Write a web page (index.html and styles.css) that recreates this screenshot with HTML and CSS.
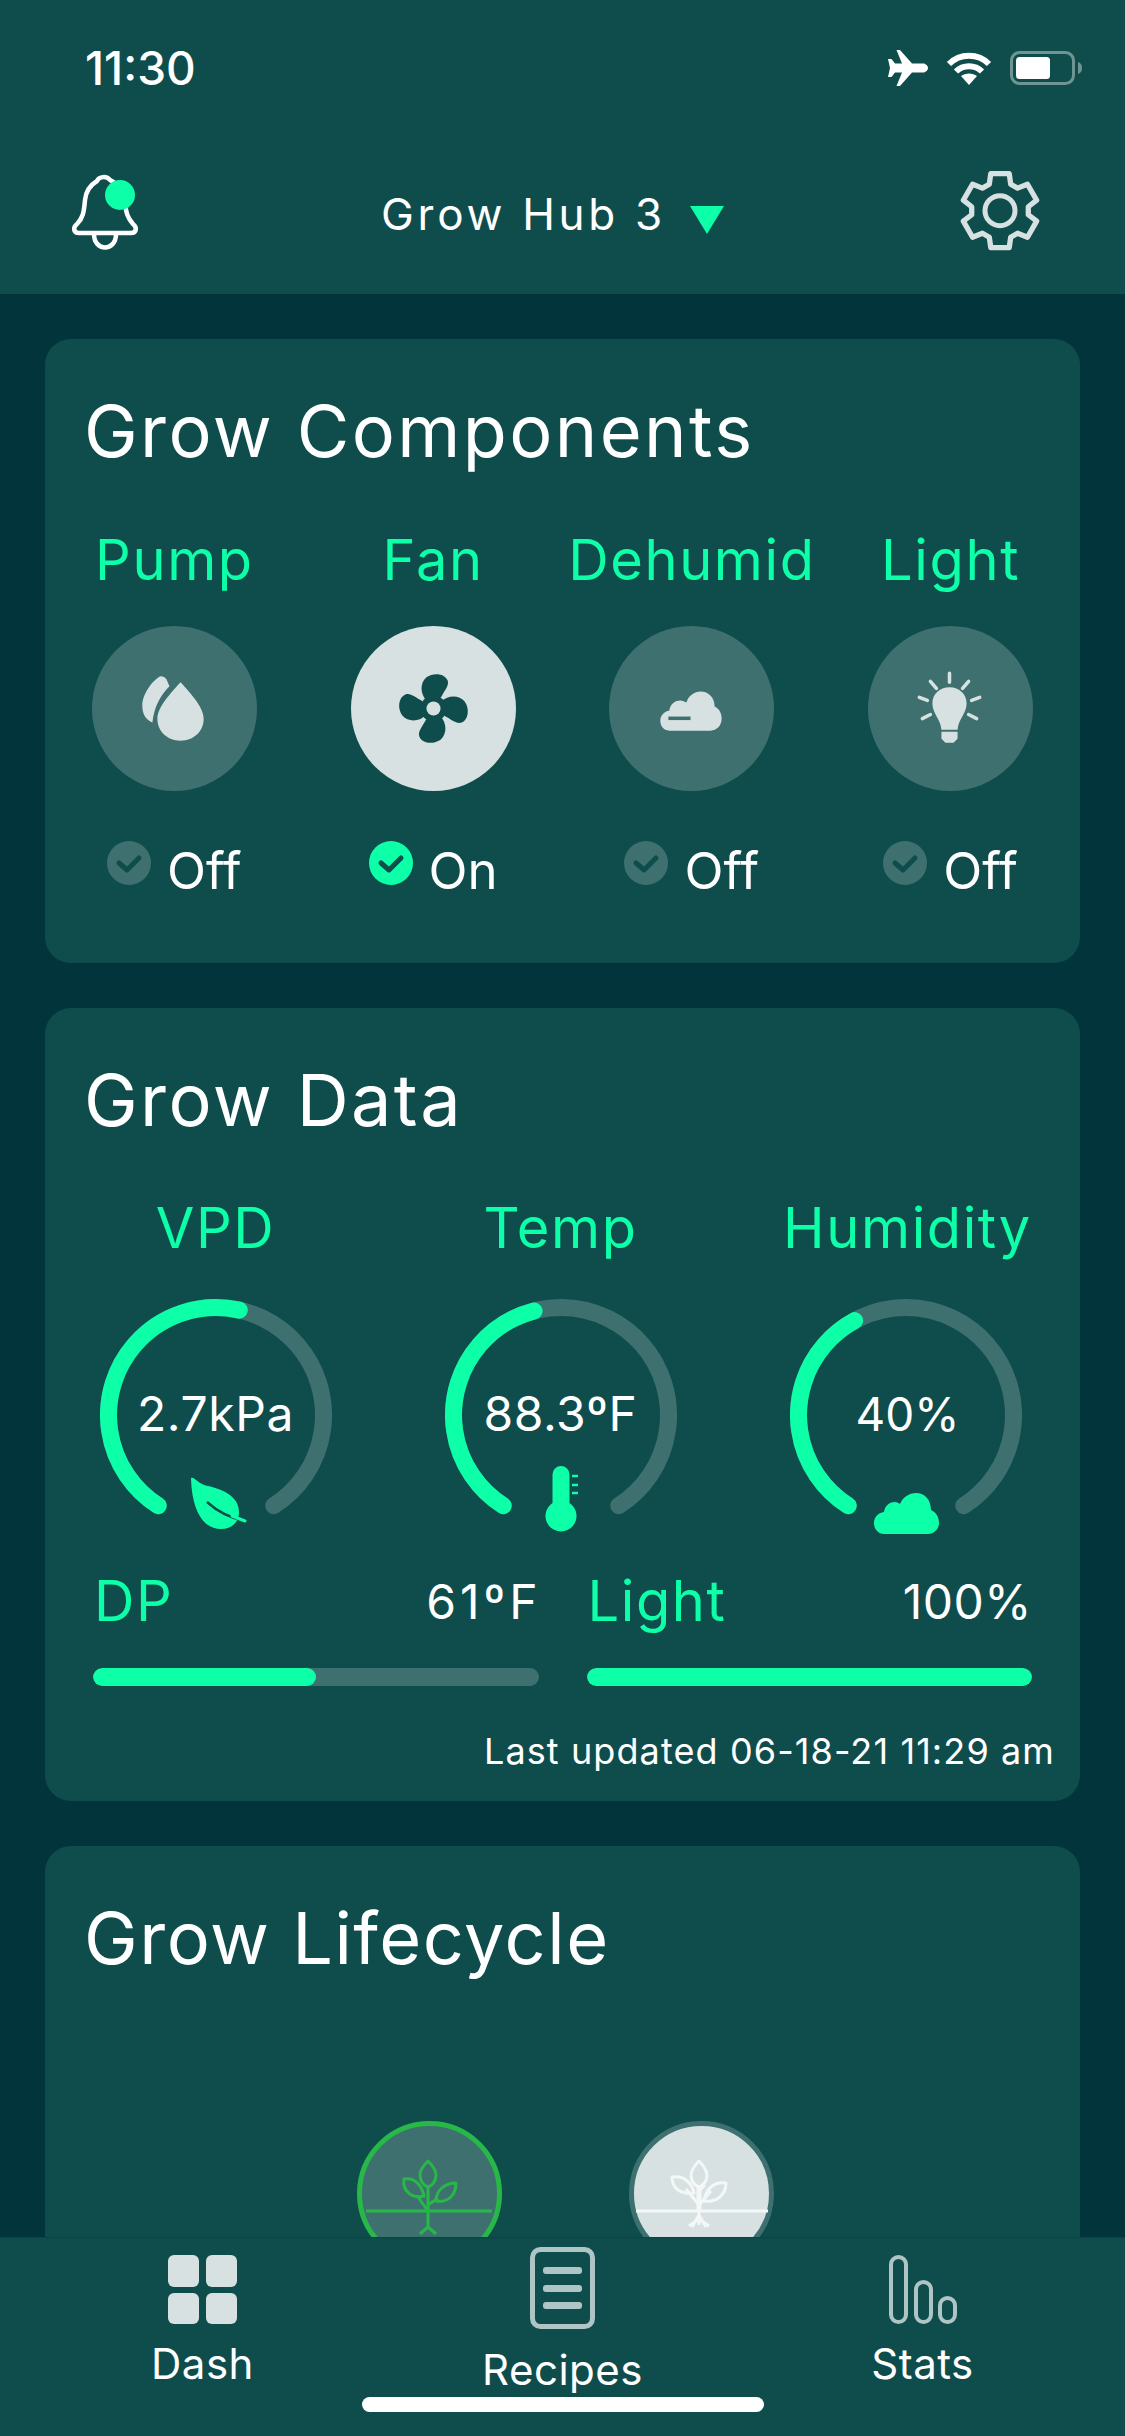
FILE: index.html
```html
<!DOCTYPE html>
<html lang="en">
<head>
<meta charset="utf-8">
<title>Grow Hub</title>
<link rel="stylesheet" href="styles.css">
</head>
<body>
<div class="phone">
  <header class="top">
    <div class="status">
      <span class="time">11:30</span>
      <div class="status-icons">
        <svg class="ic-plane" viewBox="0 0 40 36"><path d="M8.500 0h3.500L24 13.500h11c3 0 5 2.500 5 4.500s-2 4.500-5 4.500H24L12 36H8.500L14 22.500H7L3.500 27H0l2-9-2-9h3.500L7 13.500h7z" fill="#fff"/></svg>
        <svg class="ic-wifi" viewBox="0 0 46 33"><path d="M3 12c11-11 29-11 40 0M10 19.500c7-7 19-7 26 0" fill="none" stroke="#fff" stroke-width="6"/><path d="M23 33l-8-9c4.500-3.500 11.500-3.500 16 0z" fill="#fff"/></svg>
        <svg class="ic-batt" viewBox="0 0 72 34"><rect x="1.500" y="1.500" width="62" height="31" rx="8" fill="none" stroke="#6f9494" stroke-width="3"/><rect x="6" y="6" width="34" height="22" rx="3.500" fill="#fff"/><path d="M68 11c3 1 4 3 4 6s-1 5-4 6z" fill="#6f9494"/></svg>
      </div>
    </div>
    <div class="nav">
      <svg class="ic-bell" viewBox="0 0 70 85"><path d="M9 63C3 63 3 57 7 54 13 48 14 42 15 30 16 20 22 14 27 11 29 6 37 6 40 10 48 14 54 22 55 32 56 44 58 48 63 54 67 57 67 63 61 63Z M24 64C24 82 46 82 46 64" fill="none" stroke="#fff" stroke-width="4.500" stroke-linejoin="round"/><circle cx="50" cy="25" r="15" fill="#0dffa8"/></svg>
      <div class="hub"><span class="hub-name">Grow Hub 3</span><span class="tri"></span></div>
      <svg class="ic-gear" viewBox="0 0 100 100"><g fill="none" stroke="#d7e1e1" stroke-width="5" stroke-linejoin="round"><circle cx="50" cy="50.700" r="15"/><path transform="translate(50 50.700) scale(1.060) translate(-50 -50.700)" d="M41.300 15.800H58.700L60.100 25.700 66.600 29.400 75.900 25.700 84.600 40.800 76.700 47V54.500L84.600 60.600 75.900 75.700 66.600 72 60.100 75.700 58.700 85.600H41.300L39.900 75.700 33.400 72 24.100 75.700 15.400 60.600 23.300 54.500V47L15.400 40.800 24.100 25.700 33.400 29.400 39.900 25.700Z"/></g></svg>
    </div>
  </header>

  <main class="content">
    <section class="card card-components">
      <h2 class="card-title">Grow Components</h2>
      <div class="comp-grid">
        <div class="comp">
          <div class="label">Pump</div>
          <div class="disc">
            <svg viewBox="0 0 164 164"><g fill="#d7e1e1"><path d="M88 56C95 64 111 80 111 92 111 105 101 114 88 114 75 114 65 105 65 92 65 80 81 64 88 56Z"/><path d="M68 50Q72 50 74 53L77 60C68 69 62 80 60 96 53 93 50 87 50 79 50 68 60 54 68 50Z"/></g></svg>
          </div>
          <div class="state"><svg class="check" viewBox="0 0 44 44"><circle cx="22" cy="22" r="22" fill="#3f7070"/><path d="M12 22l8 7 12-12" fill="none" stroke="#0f4d4d" stroke-width="5" stroke-linecap="round" stroke-linejoin="round"/></svg><span>Off</span></div>
        </div>
        <div class="comp">
          <div class="label">Fan</div>
          <div class="disc disc-on">
            <svg viewBox="0 0 164 164"><g fill="#0f4d4d" transform="translate(82 82)"><path id="blade" d="M-7-8C-13-14-14-25-7-31 0-36 11-35 14-28 16-23 11-18 8-12 6-9 2-9-7-8Z"/><use href="#blade" transform="rotate(90)"/><use href="#blade" transform="rotate(180)"/><use href="#blade" transform="rotate(270)"/><circle r="13"/><circle r="7" fill="#d7e1e1"/></g></svg>
          </div>
          <div class="state"><svg class="check" viewBox="0 0 44 44"><circle cx="22" cy="22" r="22" fill="#0dffa8"/><path d="M12 22l8 7 12-12" fill="none" stroke="#0f4d4d" stroke-width="5" stroke-linecap="round" stroke-linejoin="round"/></svg><span>On</span></div>
        </div>
        <div class="comp">
          <div class="label">Dehumid</div>
          <div class="disc">
            <svg viewBox="0 0 164 164"><path d="M60 104C54 104 51 99 51 94 51 89 55 85 60 84 61 77 66 74 71 74 73 74 75 75 77 76 79 69 85 65 91 65 99 65 105 71 105 80 109 82 112 86 112 92 112 99 107 104 101 104Z" fill="#d7e1e1"/><rect x="59" y="90" width="22" height="3.500" fill="#3f7070"/></svg>
          </div>
          <div class="state"><svg class="check" viewBox="0 0 44 44"><circle cx="22" cy="22" r="22" fill="#3f7070"/><path d="M12 22l8 7 12-12" fill="none" stroke="#0f4d4d" stroke-width="5" stroke-linecap="round" stroke-linejoin="round"/></svg><span>Off</span></div>
        </div>
        <div class="comp">
          <div class="label">Light</div>
          <div class="disc">
            <svg viewBox="0 0 164 164"><path d="M81 61C91 61 98 68 98 77 98 87 90 92 89 103H73C72 92 64 87 64 77 64 68 71 61 81 61ZM73 105H89V112L85 116H77L73 112Z" fill="#d7e1e1"/><path d="M81 47V56M62 55L68 62M100 55L94 62M51 71L59 74M111 71L103 74M54 92L62 88M108 92L100 88" stroke="#d7e1e1" stroke-width="3.500" stroke-linecap="round"/></svg>
          </div>
          <div class="state"><svg class="check" viewBox="0 0 44 44"><circle cx="22" cy="22" r="22" fill="#3f7070"/><path d="M12 22l8 7 12-12" fill="none" stroke="#0f4d4d" stroke-width="5" stroke-linecap="round" stroke-linejoin="round"/></svg><span>Off</span></div>
        </div>
      </div>
    </section>

    <section class="card card-data">
      <h2 class="card-title">Grow Data</h2>
      <div class="gauges">
        <div class="gauge">
          <div class="label">VPD</div>
          <div class="dial">
            <svg viewBox="0 0 232 240"><path class="track" d="M58.200 207.700A107.500 107.500 0 1 1 173.800 207.700"/><path class="fill" pathLength="295" stroke-dasharray="160 295" d="M58.200 207.700A107.500 107.500 0 1 1 173.800 207.700"/><path d="M91 180C94 178 98 186 108 188 126 192 139 200 139 214 139 225 131 231 121 231 104 231 92 214 91 180Z" fill="#0dffa8"/><path d="M107 204C118 214 130 220 145 223" fill="none" stroke="#0f4d4d" stroke-width="2.500"/><path d="M132 218L145 223" stroke="#0dffa8" stroke-width="3" stroke-linecap="round"/></svg>
            <span class="reading">2.7kPa</span>
          </div>
        </div>
        <div class="gauge">
          <div class="label">Temp</div>
          <div class="dial">
            <svg viewBox="0 0 232 240"><path class="track" d="M58.200 207.700A107.500 107.500 0 1 1 173.800 207.700"/><path class="fill" pathLength="295" stroke-dasharray="133 295" d="M58.200 207.700A107.500 107.500 0 1 1 173.800 207.700"/><path d="M107.500 176.500a8.500 8.500 0 0 1 17 0V205a15.500 15.500 0 1 1-17 0Z" fill="#0dffa8"/><path d="M127 178h6M127 187h6M127 195h6" stroke="#0dffa8" stroke-width="2.500"/></svg>
            <span class="reading">88.3ºF</span>
          </div>
        </div>
        <div class="gauge gauge-hum">
          <div class="label">Humidity</div>
          <div class="dial">
            <svg viewBox="0 0 232 240"><path class="track" d="M58.200 207.700A107.500 107.500 0 1 1 173.800 207.700"/><path class="fill" pathLength="295" stroke-dasharray="119 295" d="M58.200 207.700A107.500 107.500 0 1 1 173.800 207.700"/><path d="M94 236C88 236 84 231 84 225 84 219 88 215 94 214 95 207 100 204 105 204 107 204 109 205 110 206 113 199 119 195 126 195 135 195 141 202 141 212 146 214 149 219 149 225 149 231 144 236 138 236Z" fill="#0dffa8"/></svg>
            <span class="reading">40%</span>
          </div>
        </div>
      </div>
      <div class="bars">
        <div class="bar-col">
          <div class="bar-head"><span class="label">DP</span><span class="bar-val bar-val-wide">61ºF</span></div>
          <div class="bar"><div class="bar-fill" style="width:50%"></div></div>
        </div>
        <div class="bar-col">
          <div class="bar-head"><span class="label">Light</span><span class="bar-val">100%</span></div>
          <div class="bar"><div class="bar-fill" style="width:100%"></div></div>
        </div>
      </div>
      <div class="updated">Last updated 06-18-21 11:29 am</div>
    </section>

    <section class="card card-life">
      <h2 class="card-title">Grow Lifecycle</h2>
      <div class="stages">
        <div class="stage stage-a">
          <svg viewBox="0 0 135 135"><g fill="none" stroke="#28b848" stroke-width="3" stroke-linejoin="round" transform="translate(0 -5)"><path d="M4 90H130M66 66V106M66 106l-8 7M66 106l8 7M66 90L56 76M66 84l10-7"/><path d="M66 40C60 46 58 50 58 54 58 60 62 65 66 66 70 65 74 60 74 54 74 50 72 46 66 40Z"/><path d="M42 58C54 56 60 66 62 75 50 78 40 70 42 58Z"/><path d="M94 62C82 62 74 70 74 80 86 82 94 74 94 62Z"/></g></svg>
        </div>
        <div class="stage stage-b">
          <svg viewBox="0 0 135 135"><g fill="none" stroke="#f4f7f7" stroke-width="3" stroke-linejoin="round" transform="translate(0 -5)"><path d="M2 90H134" stroke-width="3"/><path d="M65 64V90" stroke-width="5"/><path d="M65 90V104M65 94l-7 12M65 94l7 12M65 98l-10 7M65 98l10 7"/><path d="M65 84L52 68M65 84l12-14M65 70l6-6"/><path d="M65 40C59 46 57 50 57 55 57 60 61 65 65 66 69 65 73 60 73 55 73 50 71 46 65 40Z"/><path d="M38 56C50 54 58 62 60 72 48 74 38 68 38 56Z"/><path d="M92 62C80 60 72 68 70 80 82 82 92 74 92 62Z"/></g></svg>
        </div>
      </div>
    </section>
  </main>

  <nav class="tabs">
    <div class="tab tab-dash">
      <svg class="tab-ic" viewBox="0 0 69 69"><g fill="#d7e1e1"><rect width="31" height="32" rx="6"/><rect x="38" width="31" height="32" rx="6"/><rect y="38" width="31" height="31" rx="6"/><rect x="38" y="38" width="31" height="31" rx="6"/></g></svg>
      <span>Dash</span>
    </div>
    <div class="tab tab-recipes">
      <svg class="tab-ic" viewBox="0 0 65 82"><rect x="2.500" y="2.500" width="60" height="77" rx="8" fill="none" stroke="#afc5c5" stroke-width="5"/><g fill="#afc5c5"><rect x="13" y="20" width="39" height="7" rx="3"/><rect x="13" y="38" width="39" height="7" rx="3"/><rect x="13" y="55" width="39" height="7" rx="3"/></g></svg>
      <span>Recipes</span>
    </div>
    <div class="tab tab-stats">
      <svg class="tab-ic" viewBox="0 0 68 69"><g fill="none" stroke="#afc5c5" stroke-width="4"><rect x="2" y="2" width="15" height="65" rx="7.500"/><rect x="27" y="27" width="15" height="40" rx="7.500"/><rect x="51" y="43" width="15" height="24" rx="7.500"/></g></svg>
      <span>Stats</span>
    </div>
    <div class="home"></div>
  </nav>
</div>
</body>
</html>
```
FILE: styles.css
```css
* { box-sizing: border-box; }
html, body { margin: 0; padding: 0; }
body { background: #00343c; font-family: "Inter", "Noto Sans", sans-serif; color: #fff; }
.phone { width: 1125px; height: 2436px; display: flex; flex-direction: column; overflow: hidden; background: #01343b; }

.top { height: 294px; background: #0f4d4d; flex: none; }
.status { height: 100px; padding: 40px 43px 0 85px; display: flex; justify-content: space-between; align-items: flex-start; }
.time { font-size: 46px; line-height: 56px; font-weight: 500; }
.status-icons { display: flex; gap: 18px; align-items: center; padding-top: 10px; }
.ic-plane { width: 40px; height: 36px; }
.ic-wifi { width: 46px; height: 33px; }
.ic-batt { width: 72px; height: 34px; }
.nav { padding: 70px 75px 0 70px; display: flex; justify-content: space-between; align-items: flex-start; }
.ic-bell { width: 70px; height: 85px; }
.ic-gear { width: 100px; height: 100px; margin-top: -10px; }
.hub { display: flex; align-items: center; gap: 24px; margin: 19px 0 0 15px; }
.hub-name { font-size: 44px; line-height: 50px; letter-spacing: 3.7px; }
.tri { width: 0; height: 0; border-left: 17px solid transparent; border-right: 17px solid transparent; border-top: 28px solid #0dffa8; margin-top: 11px; }

.content { flex: 1; min-height: 0; overflow: hidden; padding: 45px 45px 0; display: flex; flex-direction: column; gap: 45px; }
.card { background: #0f4d4d; border-radius: 26px; flex: none; }
.card-title { margin: 0; padding: 50px 0 0 39px; font-size: 72px; line-height: 84px; font-weight: 400; letter-spacing: 2.4px; }
.card-life .card-title { letter-spacing: 1.5px; }
.label { color: #0dffa8; font-size: 56px; line-height: 66px; font-weight: 400; text-align: center; letter-spacing: 1.6px; }

.card-components { height: 624px; }
.comp-grid { display: grid; grid-template-columns: repeat(4, 1fr); margin: 54px 0 0 0; }
.comp { display: flex; flex-direction: column; align-items: center; }
.disc { width: 165px; height: 165px; border-radius: 50%; background: #3f7070; margin-top: 33px; }
.disc svg { display: block; width: 165px; height: 165px; }
.disc-on { background: #d7e1e1; }
.state { display: flex; gap: 16px; align-items: flex-start; margin-top: 50px; font-size: 51px; line-height: 60px; }
.check { width: 44px; height: 44px; }

.card-data { height: 793px; }
.gauges { display: grid; grid-template-columns: repeat(3, 345px); margin: 53px 0 0 -2px; }
.gauge { display: flex; flex-direction: column; align-items: center; }
.gauge-hum .label { margin-left: 4px; }
.dial { position: relative; width: 232px; height: 240px; margin-top: 37px; }
.dial svg { display: block; width: 232px; height: 240px; }
.track, .fill { fill: none; stroke-width: 17; stroke-linecap: round; }
.track { stroke: #3f7070; }
.fill { stroke: #0dffa8; }
.reading { position: absolute; left: 0; right: 0; top: 86px; text-align: center; font-size: 48px; line-height: 60px; letter-spacing: 0.6px; }
.gauge-hum .reading { left: 4px; font-size: 46px; letter-spacing: 0; }
.bars { display: flex; gap: 48px; padding: 0 48px; margin-top: 30px; }
.bar-col { flex: 1; }
.bar-head { display: flex; justify-content: space-between; align-items: center; padding: 0 0 0 1px; height: 66px; }
.bar-val { font-size: 48px; letter-spacing: 0.5px; }
.bar-val-wide { letter-spacing: 4px; margin-right: -3px; }
.bar { height: 18px; border-radius: 9px; background: #3f7070; margin-top: 34px; overflow: hidden; }
.bar-fill { height: 18px; border-radius: 9px; background: #0dffa8; }
.updated { text-align: right; padding-right: 25px; margin-top: 43px; font-size: 36px; line-height: 44px; letter-spacing: 1.1px; }

.card-life { height: 600px; }
.stages { display: flex; gap: 127px; padding: 141px 0 0 312px; }
.stage { width: 145px; height: 145px; border-radius: 50%; border: 5px solid; }
.stage svg { display: block; width: 135px; height: 135px; }
.stage-a { background: #3f7070; border-color: #28b848; }
.stage-b { background: #d7e1e1; border-color: #3f7070; }

.tabs { position: relative; flex: none; height: 199px; background: #0f4d4d; border-top: 1px solid #0a4444; display: grid; grid-template-columns: 405px 315px 1fr; }
.tab { display: flex; flex-direction: column; align-items: center; font-size: 42px; line-height: 50px; letter-spacing: 0.5px; }
.tab-dash { padding-top: 17px; }
.tab-dash .tab-ic { width: 69px; height: 69px; }
.tab-recipes { padding-top: 9px; }
.tab-recipes .tab-ic { width: 65px; height: 82px; margin-bottom: 16px; }
.tab-stats { padding-top: 17px; }
.tab-stats .tab-ic { width: 68px; height: 69px; }
.tab-ic { margin-bottom: 15px; }
.home { position: absolute; left: 362px; top: 159px; width: 402px; height: 15px; border-radius: 8px; background: #fff; }
```
